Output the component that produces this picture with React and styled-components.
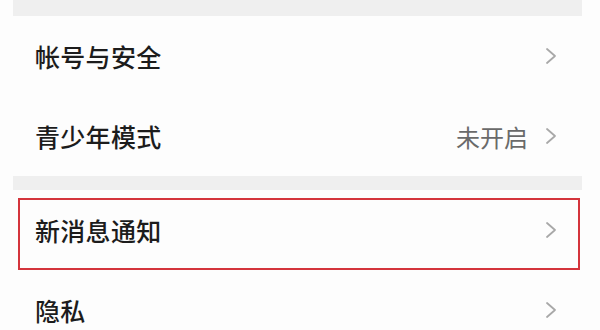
import React from 'react';
import styled, { createGlobalStyle } from 'styled-components';

const GlobalStyle = createGlobalStyle`
    html, body {
        margin: 0;
        padding: 0;
        background: #fdfdfd;
    }
    body {
        font-family: "Noto Sans CJK SC", "Noto Sans", sans-serif;
    }
`

const Page = styled.div`
    width: 600px;
    height: 330px;
    overflow: hidden;
    background: #fdfdfd;
`

const Gap = styled.div`
    height: ${props => props.h}px;
    margin: 0 18px 0 13px;
    background: #efefef;
`

const Row = styled.div`
    position: relative;
    display: flex;
    align-items: center;
    justify-content: space-between;
    height: 80px;
    padding: 0 42px 0 35px;
`

const Label = styled.span`
    font-size: 25px;
    font-weight: 500;
    color: #1c1c1c;
    letter-spacing: 0.3px;
`

const Right = styled.div`
    display: flex;
    align-items: center;
    gap: 16px;
`

const Value = styled.span`
    font-size: 24px;
    color: #6a6a6a;
`

const Highlight = styled.div`
    position: absolute;
    left: 18px;
    right: 20px;
    top: 8px;
    bottom: 0;
    border: 2px solid #d4343c;
    pointer-events: none;
`

function Chevron() {
    return (
        <svg width="14" height="20" viewBox="0 0 14 20">
            <path d="M3 3 L11 10 L3 17" fill="none" stroke="#a8a8a8" strokeWidth="1.8" strokeLinecap="round" strokeLinejoin="round" />
        </svg>
    )
}

function Item({ label, value, highlight }) {
    return (
        <Row>
            <Label>{label}</Label>
            <Right>
                {value ? <Value>{value}</Value> : null}
                <Chevron />
            </Right>
            {highlight ? <Highlight /> : null}
        </Row>
    )
}

export default function App() {
    return (
        <Page>
            <GlobalStyle />
            <Gap h={16} />
            <Item label="帐号与安全" />
            <Item label="青少年模式" value="未开启" />
            <Gap h={14} />
            <Item label="新消息通知" highlight />
            <Item label="隐私" />
        </Page>
    )
}
